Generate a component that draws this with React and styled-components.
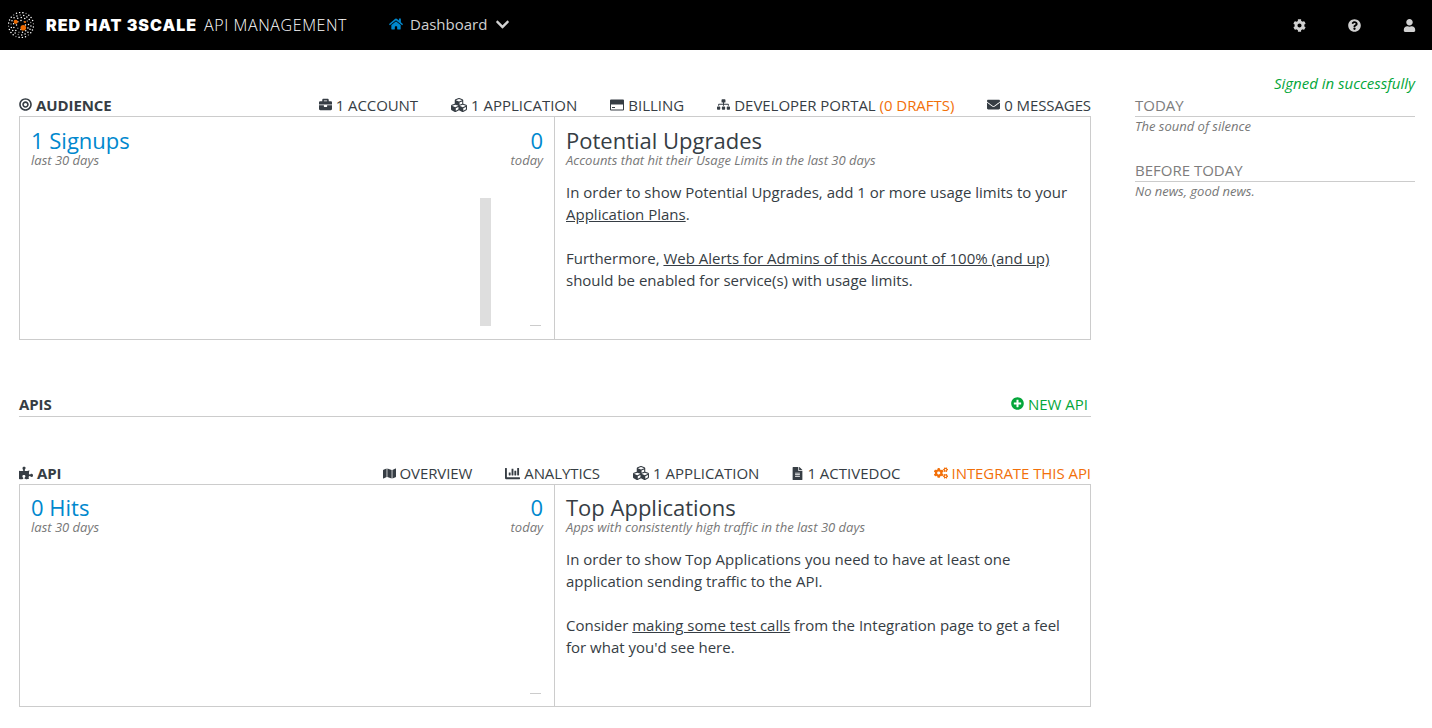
import React from "react";
import styled, { createGlobalStyle } from "styled-components";
import {
  FaHome, FaChevronDown, FaCog, FaQuestionCircle, FaUser, FaBullseye, FaBriefcase, FaCubes,
  FaSitemap, FaEnvelope, FaPuzzlePiece, FaPlusCircle, FaMap, FaChartBar, FaFileAlt, FaCogs,
} from "react-icons/fa";

const Global = createGlobalStyle`
  html, body { margin: 0; padding: 0; background: #fff; }
  body { font-family: "Open Sans", "Liberation Sans", sans-serif; font-size: 15px; line-height: 22px; color: #363d44; overflow: hidden; }
  * { box-sizing: border-box; }
`;

const TopBar = styled.header`
  height: 50px; background: #000; display: flex; align-items: center; padding: 0 16px 1px 8px; color: #d1d1d1;
`;
const LogoWrap = styled.div`display: flex; align-items: center; width: 381px;`;
const Brand = styled.span`
  margin-left: 12px; font-family: Inter, sans-serif; font-weight: 900; font-size: 16px; letter-spacing: 1px; color: #fff; white-space: nowrap;
`;
const Product = styled.span`
  margin-left: 7px; font-family: "Open Sans", sans-serif; font-weight: 300; font-size: 16px; letter-spacing: 0.6px; color: #fff; white-space: nowrap;
`;
const NavItem = styled.div`
  display: flex; align-items: center; font-size: 15px; color: #d1d1d1; padding-bottom: 1px;
  svg:first-child { color: #0088ce; font-size: 14px; margin-right: 7px; }
  svg:last-child { color: #d1d1d1; font-size: 15px; margin-left: 8px; }
`;
const TopIcons = styled.div`
  margin-left: auto; display: flex; align-items: center; gap: 42px; color: #d1d1d1; font-size: 13px; padding-top: 1px;
  svg { display: block; }
`;

const Page = styled.main`display: flex; padding: 0 17px 0 19px;`;
const MainCol = styled.div`width: 1072px; padding-top: 43px;`;
const Side = styled.aside`margin-left: 44px; width: 280px; padding-top: 22px;`;

const Flash = styled.div`
  text-align: right; font-style: italic; color: #04a63a; font-size: 15px; line-height: 22px;
`;
const SideHead = styled.h3`
  margin: ${(p) => (p.$first ? "0" : "24px")} 0 0; font-size: 15px; font-weight: 400; line-height: 22px; color: #7d7d7d;
  border-bottom: 1px solid #ccc;
`;
const SideNote = styled.div`font-size: 13px; font-style: italic; color: #777; line-height: 18px;`;

const SectionBar = styled.div`
  display: flex; align-items: center; justify-content: space-between; height: ${(p) => p.$h || 23}px; margin-top: ${(p) => p.$top || 0}px;
`;
const SectionTitle = styled.div`
  display: flex; align-items: center; gap: 4px; font-weight: 700; font-size: 15px; letter-spacing: -0.08px; color: #363d44;
  svg { font-size: 13px; }
`;
const Links = styled.nav`display: flex; gap: 33px;`;
const LinkItem = styled.span`
  display: inline-flex; align-items: center; gap: 4px; font-size: 15px; letter-spacing: ${(p) => p.$ls || 0}px; white-space: nowrap;
  color: ${(p) => (p.$tone === "orange" ? "#f2700a" : p.$tone === "green" ? "#04a63a" : "#363d44")};
  font-weight: 400;
  svg { font-size: 13px; flex: none; }
`;
const Orange = styled.span`color: #f2700a;`;
const FileIcon = styled(FaFileAlt)`margin: 0 -1px;`;

const Panel = styled.section`
  display: grid; grid-template-columns: 535px 1fr; height: ${(p) => p.$h}px; border: 1px solid #ccc;
`;
const Stats = styled.div`
  display: flex; flex-direction: column; padding: ${(p) => p.$pt}px 11px 0 11px; border-right: 1px solid #ccc;
`;
const StatRow = styled.div`display: flex; justify-content: space-between;`;
const Stat = styled.div`text-align: ${(p) => p.$align || "left"};`;
const StatValue = styled.div`font-size: 22px; line-height: 24px; color: #0088ce;`;
const Small = styled.div`font-size: 13px; font-style: italic; color: #777; line-height: 16px;`;
const Chart = styled.svg`display: block; margin-top: ${(p) => p.$mt}px; margin-left: auto;`;

const Info = styled.div`padding: ${(p) => p.$pt}px 11px 0 11px;`;
const InfoTitle = styled.h2`margin: 0; font-size: 22px; font-weight: 400; line-height: 24px; color: #363d44;`;
const InfoBody = styled.div`margin-top: 13px; font-size: 15px; line-height: 22px; color: #363d44;`;
const Para = styled.p`margin: 0 0 22px;`;
const Under = styled.a`color: #363d44; text-decoration: underline;`;
const ApisHead = styled.div`
  display: flex; align-items: center; justify-content: space-between; margin-top: 53px; height: 24px;
  padding: 0 3px 2px 0; border-bottom: 1px solid #ccc;
`;
const ApisTitle = styled.span`font-weight: 700; letter-spacing: -0.08px;`;

function CardIcon() {
  return (
    <svg width="14" height="12" viewBox="0 0 14 12" fill="currentColor">
      <path fillRule="evenodd" d="M1 0.5h12a1 1 0 0 1 1 1v9a1 1 0 0 1-1 1H1a1 1 0 0 1-1-1v-9a1 1 0 0 1 1-1zM1 5.5v5h12v-5zM2 8h3v1H2z" />
    </svg>
  );
}

function Logo() {
  const dots = [];
  const rings = [[4.5, 8], [7.5, 13], [10, 18], [12.5, 24]];
  rings.forEach(([r, n], i) => {
    for (let k = 0; k < n; k++) {
      const a = (k / n) * Math.PI * 2 + i * 0.4;
      dots.push(<circle key={`${i}-${k}`} cx={13 + r * Math.cos(a)} cy={13 + r * Math.sin(a)} r={0.75} fill="#fff" opacity={k % 4 === 3 ? 0.5 : 1} />);
    }
  });
  return (
    <svg width="26" height="26" viewBox="0 0 26 26">
      {dots}
      <circle cx="7.7" cy="9.8" r="2.1" fill="#ee6a00" />
      <circle cx="15.3" cy="15.8" r="2.8" fill="#ee6a00" />
      <circle cx="17" cy="10" r="1.1" fill="#ee6a00" />
    </svg>
  );
}

export default function App() {
  return (
    <>
      <Global />
      <TopBar>
        <LogoWrap>
          <Logo />
          <Brand>RED HAT 3SCALE</Brand>
          <Product>API MANAGEMENT</Product>
        </LogoWrap>
        <NavItem><FaHome />Dashboard<FaChevronDown /></NavItem>
        <TopIcons><FaCog /><FaQuestionCircle /><FaUser /></TopIcons>
      </TopBar>
      <Page>
        <MainCol>
          <SectionBar>
            <SectionTitle><FaBullseye />AUDIENCE</SectionTitle>
            <Links>
              <LinkItem $ls={-0.1}><FaBriefcase />1 ACCOUNT</LinkItem>
              <LinkItem><FaCubes size={16} />1 APPLICATION</LinkItem>
              <LinkItem><CardIcon />BILLING</LinkItem>
              <LinkItem $ls={-0.04}><FaSitemap /><span>DEVELOPER PORTAL <Orange>(0 DRAFTS)</Orange></span></LinkItem>
              <LinkItem $ls={-0.1}><FaEnvelope />0 MESSAGES</LinkItem>
            </Links>
          </SectionBar>
          <Panel $h={224}>
            <Stats $pt={11}>
              <StatRow>
                <Stat><StatValue>1 Signups</StatValue><Small>last 30 days</Small></Stat>
                <Stat $align="right"><StatValue>0</StatValue><Small>today</Small></Stat>
              </StatRow>
              <Chart $mt={30} width="63" height="128" viewBox="0 0 63 128">
                <rect x="0" y="0" width="11" height="128" fill="#dedede" />
                <rect x="50" y="127" width="11" height="1" fill="#ccc" />
              </Chart>
            </Stats>
            <Info $pt={11}>
              <InfoTitle>Potential Upgrades</InfoTitle>
              <Small>Accounts that hit their Usage Limits in the last 30 days</Small>
              <InfoBody>
                <Para>In order to show Potential Upgrades, add 1 or more usage limits to your <Under>Application Plans</Under>.</Para>
                <Para>Furthermore, <Under>Web Alerts for Admins of this Account of 100% (and up)</Under> should be enabled for service(s) with usage limits.</Para>
              </InfoBody>
            </Info>
          </Panel>

          <ApisHead>
            <ApisTitle>APIS</ApisTitle>
            <LinkItem $tone="green"><FaPlusCircle />NEW API</LinkItem>
          </ApisHead>

          <SectionBar $top={45} $h={22}>
            <SectionTitle><FaPuzzlePiece size={14} />API</SectionTitle>
            <Links>
              <LinkItem $ls={-0.1}><FaMap />OVERVIEW</LinkItem>
              <LinkItem $ls={-0.1}><FaChartBar size={15} />ANALYTICS</LinkItem>
              <LinkItem><FaCubes size={16} />1 APPLICATION</LinkItem>
              <LinkItem><FileIcon />1 ACTIVEDOC</LinkItem>
              <LinkItem $tone="orange" $ls={-0.06}><FaCogs size={14} />INTEGRATE THIS API</LinkItem>
            </Links>
          </SectionBar>
          <Panel $h={223}>
            <Stats $pt={10}>
              <StatRow>
                <Stat><StatValue>0 Hits</StatValue><Small>last 30 days</Small></Stat>
                <Stat $align="right"><StatValue>0</StatValue><Small>today</Small></Stat>
              </StatRow>
              <Chart $mt={158} width="63" height="1" viewBox="0 0 63 1">
                <rect x="50" y="0" width="11" height="1" fill="#ccc" />
              </Chart>
            </Stats>
            <Info $pt={10}>
              <InfoTitle>Top Applications</InfoTitle>
              <Small>Apps with consistently high traffic in the last 30 days</Small>
              <InfoBody>
                <Para>In order to show Top Applications you need to have at least one application sending traffic to the API.</Para>
                <Para>Consider <Under>making some test calls</Under> from the Integration page to get a feel for what you'd see here.</Para>
              </InfoBody>
            </Info>
          </Panel>
        </MainCol>
        <Side>
          <Flash>Signed in successfully</Flash>
          <SideHead $first>TODAY</SideHead>
          <SideNote>The sound of silence</SideNote>
          <SideHead>BEFORE TODAY</SideHead>
          <SideNote>No news, good news.</SideNote>
        </Side>
      </Page>
    </>
  );
}
